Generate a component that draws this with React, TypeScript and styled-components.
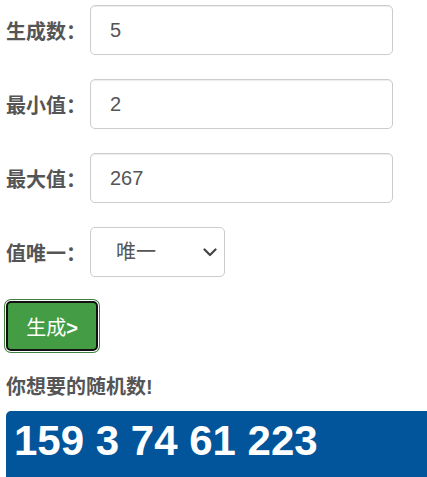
import React, { useState } from 'react'
import styled, { createGlobalStyle } from 'styled-components'

const GlobalStyle = createGlobalStyle`
  html, body {
    margin: 0;
    padding: 0;
    background: #fff;
    overflow: hidden;
  }
  body {
    font-family: "Liberation Sans", "Noto Sans CJK SC", sans-serif;
    color: #555;
  }
`

const Page = styled.div`
  padding: 5px 0 0 6px;
  display: flex;
  flex-direction: column;
`

const FormRow = styled.div`
  display: flex;
  align-items: center;
  height: 50px;
  margin-bottom: 24px;
`

const Label = styled.label`
  width: 84px;
  flex: none;
  font-size: 20px;
  font-weight: bold;
  color: #555;
`

const TextInput = styled.input`
  box-sizing: border-box;
  width: 303px;
  height: 50px;
  padding: 0 19px;
  border: 1px solid #ccc;
  border-radius: 5px;
  font-family: inherit;
  font-size: 20px;
  color: #555;
  outline: none;
  box-shadow: inset 0 1px 1px rgba(0, 0, 0, 0.075);
`

const SelectWrap = styled.div`
  position: relative;
  width: 135px;
  height: 50px;
`

const Select = styled.select`
  appearance: none;
  box-sizing: border-box;
  width: 100%;
  height: 100%;
  padding: 0 30px 0 25px;
  border: 1px solid #ccc;
  border-radius: 5px;
  background: #fff;
  font-family: inherit;
  font-size: 20px;
  color: #555;
  outline: none;
`

const Chevron = styled.svg`
  position: absolute;
  right: 8px;
  top: 21px;
  pointer-events: none;
`

const GenerateButton = styled.button`
  align-self: flex-start;
  box-sizing: border-box;
  width: 92px;
  height: 50px;
  margin: 0 0 22px 0;
  padding: 0;
  border: 2px solid #111;
  border-radius: 5px;
  background: #449d44;
  color: #fff;
  font-family: inherit;
  font-size: 20px;
  cursor: pointer;
  box-shadow: 0 0 0 1px #fff, 0 0 0 2px #3f7f3f;

  b {
    font-weight: bold;
  }
`

const ResultTitle = styled.h4`
  margin: 0 0 10px 0;
  font-size: 20px;
  line-height: 28px;
  font-weight: bold;
  color: #555;
`

const ResultBox = styled.div`
  margin-right: -10px;
  padding: 6px 8px 20px;
  border-radius: 5px;
  background: #02559a;
  color: #fff;
  font-size: 42px;
  line-height: 48px;
  font-weight: bold;
`

export default function App() {
  const [count, setCount] = useState('5')
  const [min, setMin] = useState('2')
  const [max, setMax] = useState('267')
  const [unique, setUnique] = useState('1')

  return (
    <Page>
      <GlobalStyle />
      <FormRow>
        <Label>生成数：</Label>
        <TextInput value={count} onChange={e => setCount(e.target.value)} />
      </FormRow>
      <FormRow>
        <Label>最小值：</Label>
        <TextInput value={min} onChange={e => setMin(e.target.value)} />
      </FormRow>
      <FormRow>
        <Label>最大值：</Label>
        <TextInput value={max} onChange={e => setMax(e.target.value)} />
      </FormRow>
      <FormRow>
        <Label>值唯一：</Label>
        <SelectWrap>
          <Select value={unique} onChange={e => setUnique(e.target.value)}>
            <option value="1">唯一</option>
            <option value="0">可重复</option>
          </Select>
          <Chevron width="14" height="9" viewBox="0 0 14 9">
            <path d="M1.5 1.5 L7 7 L12.5 1.5" fill="none" stroke="#444" strokeWidth="2.2" strokeLinecap="round" strokeLinejoin="round" />
          </Chevron>
        </SelectWrap>
      </FormRow>
      <GenerateButton>生成<b>&gt;</b></GenerateButton>
      <ResultTitle>你想要的随机数!</ResultTitle>
      <ResultBox>159 3 74 61 223</ResultBox>
    </Page>
  )
}
